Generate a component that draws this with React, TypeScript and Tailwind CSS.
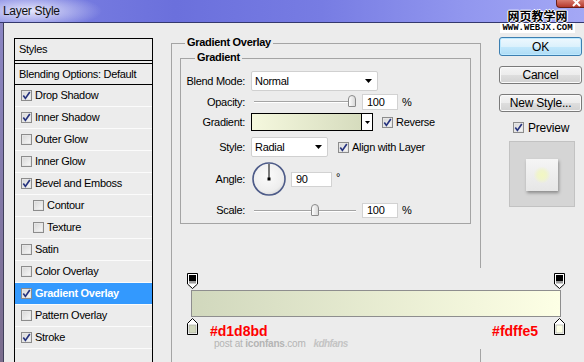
import React from "react";

const styleRows = [
  { label: "Drop Shadow", on: true },
  { label: "Inner Shadow", on: true },
  { label: "Outer Glow", on: false },
  { label: "Inner Glow", on: false },
  { label: "Bevel and Emboss", on: true },
  { label: "Contour", on: false, sub: true },
  { label: "Texture", on: false, sub: true },
  { label: "Satin", on: false },
  { label: "Color Overlay", on: false },
  { label: "Gradient Overlay", on: true, active: true },
  { label: "Pattern Overlay", on: false },
  { label: "Stroke", on: true },
];

function Check({ on }: { on?: boolean }) {
  return (
    <span className="flex h-[11px] w-[11px] shrink-0 items-center justify-center border border-[#8c8c8c] bg-[linear-gradient(135deg,#d6d6d6,#f9f9f9)] shadow-[inset_0_0_0_1px_#e6e6e6]">
      {on && (
        <svg width="9" height="9" viewBox="0 0 9 9">
          <path d="M1.3 4.6 L3.4 7.4 L7.8 1" fill="none" stroke="#26337e" strokeWidth="1.7" />
        </svg>
      )}
    </span>
  );
}

function Arrow() {
  return (
    <svg width="7" height="4" viewBox="0 0 7 4">
      <path d="M0 0 H7 L3.5 4 Z" fill="#000" />
    </svg>
  );
}

function Field({ value, w }: { value: string; w: string }) {
  return (
    <div className={`flex h-full items-center border border-[#d2d2d2] bg-white pl-[4px] ${w}`}>{value}</div>
  );
}

function Label({ text }: { text: string }) {
  return <div className="w-[64px] shrink-0 text-right">{text}</div>;
}

function Slider({ thumb }: { thumb: string }) {
  return (
    <div className="relative h-full w-[107px]">
      <div className="absolute left-[3px] right-[2px] top-1/2 h-[2px] -translate-y-1/2 border-t border-[#a4a4a4] border-b border-b-white" />
      <div className={`absolute top-[1px] h-[12px] w-[8px] rounded-t-[4px] rounded-b-[1px] border border-[#8a8a8a] bg-[linear-gradient(90deg,#fdfdfd,#d8d8d8)] ${thumb}`} />
    </div>
  );
}

function Btn({ children, primary }: { children: React.ReactNode; primary?: boolean }) {
  return (
    <div
      className={`flex items-center justify-center rounded-[3px] border text-[12px] tracking-[-0.2px] ${
        primary
          ? "h-[19px] border-[#3c7fb1] bg-[linear-gradient(#eef8fe_0%,#dcf1fc_50%,#c3e8fc_51%,#aedcf5_100%)] shadow-[inset_0_0_0_1px_#bde9ff]"
          : "h-[18px] border-[#7a7a7a] bg-[linear-gradient(#f4f4f4_0%,#ececec_50%,#dedede_51%,#d2d2d2_100%)] shadow-[inset_0_0_0_1px_#fafafa]"
      }`}
    >
      {children}
    </div>
  );
}

function TopStop() {
  return (
    <svg width="11" height="16" viewBox="0 0 11 16">
      <path d="M0.5 0.5 H10.5 V11 L5.5 15.5 L0.5 11 Z" fill="#fff" stroke="#000" />
      <rect x="2" y="2" width="7" height="6" fill="#000" />
      <rect x="2" y="8" width="7" height="2.5" fill="#9c9c9c" />
    </svg>
  );
}

function BottomStop({ color }: { color: string }) {
  return (
    <svg width="11" height="17" viewBox="0 0 11 17">
      <path d="M5.5 0.5 L10.5 5.5 V16.5 H0.5 V5.5 Z" fill="#fff" stroke="#000" />
      <rect x="2" y="7" width="7" height="8" fill={color} stroke="#a0a0a0" strokeWidth="0.6" />
    </svg>
  );
}

export default function App() {
  return (
    <div className="relative h-[362px] w-[584px] overflow-hidden bg-[#ececec] font-['Liberation_Sans',Arial,sans-serif] text-[11px] tracking-[-0.3px] text-black">
      {/* title bar */}
      <div className="flex h-[23px] justify-between border-b border-[#34386e] bg-[radial-gradient(ellipse_72px_18px_at_30px_11px,rgba(236,236,252,0.95),rgba(236,236,252,0)),linear-gradient(90deg,#7e83e2_0%,#6b70dc_30%,#777ce3_55%,#9297ef_80%,#a4a8f5_100%)]">
        <div className="flex items-center pl-[3px] text-[12px] text-[#111]">Layer Style</div>
        <div className="flex h-[8px] w-[28px] items-end justify-end rounded-bl-[4px] border-b border-l border-[#6a1f18] bg-[linear-gradient(#d97b6f,#b5392d)] pr-[3px]">
          <svg width="9" height="7" viewBox="0 0 9 7">
            <path d="M1 -1 L8 6 M8 -1 L1 6" stroke="#fff" strokeWidth="2" />
          </svg>
        </div>
      </div>

      <div className="flex h-[339px]">
        <div className="h-full w-[4px] border-r border-[#40405a] bg-[linear-gradient(#8b86c4,#7a6c8c)]" />

        {/* styles list */}
        <div className="ml-[10px] mt-[15px] h-[330px] w-[139px] border border-black">
          <div className="flex h-[22px] items-center border-b border-black pl-[4px]">Styles</div>
          <div className="h-[2px]" />
          <div className="flex h-[22px] items-center border-y border-black pl-[4px]">Blending Options: Default</div>
          {styleRows.map((r) => (
            <div
              key={r.label}
              className={`flex h-[22px] items-center gap-[3px] border-b border-[#fbfbfb] ${r.sub ? "pl-[18px]" : "pl-[6px]"} ${
                r.active ? "bg-[#3399fe] font-bold text-white" : ""
              }`}
            >
              <Check on={r.on} />
              <span>{r.label}</span>
            </div>
          ))}
        </div>

        {/* gradient overlay group */}
        <div className="relative ml-[18px] mt-[20px] h-[330px] w-[310px] border border-[#a4a4a4]">
          <span className="absolute left-[13px] top-[-8px] bg-[#ececec] px-[2px] font-bold leading-[13px]">Gradient Overlay</span>
          <div className="relative ml-[8px] mt-[14px] w-[291px] border border-[#a4a4a4] pb-[5px] pt-[12px]">
            <span className="absolute left-[14px] top-[-8px] bg-[#ececec] px-[2px] font-bold leading-[13px]">Gradient</span>

            <div className="flex h-[20px] items-center">
              <Label text="Blend Mode:" />
              <div className="ml-[6px] flex h-full w-[127px] items-center justify-between rounded-[2px] border border-[#d0d0d0] bg-white pl-[3px] pr-[5px]">
                <span>Normal</span>
                <Arrow />
              </div>
            </div>

            <div className="mt-[3px] flex h-[16px] items-center">
              <Label text="Opacity:" />
              <div className="ml-[6px] h-full">
                <Slider thumb="left-[97px]" />
              </div>
              <div className="ml-[4px] h-full">
                <Field value="100" w="w-[36px]" />
              </div>
              <span className="ml-[4px]">%</span>
            </div>

            <div className="mt-[3px] flex h-[18px] items-center">
              <Label text="Gradient:" />
              <div className="ml-[6px] flex h-full w-[122px] border border-black">
                <div className="h-full flex-1 bg-[linear-gradient(90deg,#f5f8de,#d6dcbe)]" />
                <div className="flex h-full w-[11px] items-center justify-center border-l border-black bg-white">
                  <svg width="5" height="3" viewBox="0 0 5 3">
                    <path d="M0 0 H5 L2.5 3 Z" fill="#000" />
                  </svg>
                </div>
              </div>
              <div className="ml-[9px] flex items-center gap-[3px]">
                <Check on />
                <span>Reverse</span>
              </div>
            </div>

            <div className="mt-[6px] flex h-[20px] items-center">
              <Label text="Style:" />
              <div className="ml-[6px] flex h-full w-[77px] items-center justify-between rounded-[2px] border border-[#d0d0d0] bg-white pl-[3px] pr-[5px]">
                <span>Radial</span>
                <Arrow />
              </div>
              <div className="ml-[10px] flex items-center gap-[3px]">
                <Check on />
                <span>Align with Layer</span>
              </div>
            </div>

            <div className="mt-[5px] flex h-[34px] items-center">
              <Label text="Angle:" />
              <svg className="ml-[7px]" width="34" height="34" viewBox="0 0 34 34">
                <defs>
                  <radialGradient id="dial" cx="0.45" cy="0.4" r="0.65">
                    <stop offset="0" stopColor="#fbfbfb" />
                    <stop offset="0.75" stopColor="#eeeeee" />
                    <stop offset="1" stopColor="#d4d4d4" />
                  </radialGradient>
                </defs>
                <circle cx="17" cy="17" r="16" fill="url(#dial)" stroke="#4d5b88" strokeWidth="1.6" />
                <line x1="17" y1="17" x2="17" y2="2" stroke="#000" strokeWidth="1" />
                <rect x="15.5" y="15.5" width="3" height="3" fill="#000" />
              </svg>
              <div className="ml-[5px] h-[15px]">
                <Field value="90" w="w-[41px]" />
              </div>
              <span className="ml-[4px] self-start pt-[7px]">°</span>
            </div>

            <div className="mt-[7px] flex h-[15px] items-center">
              <Label text="Scale:" />
              <div className="ml-[6px] h-full">
                <Slider thumb="left-[60px]" />
              </div>
              <div className="ml-[4px] h-full">
                <Field value="100" w="w-[36px]" />
              </div>
              <span className="ml-[4px]">%</span>
            </div>
          </div>
        </div>

        {/* buttons */}
        <div className="ml-[18px] mt-[14px] flex w-[83px] flex-col">
          <Btn primary>OK</Btn>
          <div className="mt-[10px]">
            <Btn>Cancel</Btn>
          </div>
          <div className="mt-[10px]">
            <Btn>New Style...</Btn>
          </div>
          <div className="mt-[9px] flex h-[13px] items-center gap-[4px] pl-[14px] text-[12px] tracking-[-0.2px]">
            <Check on />
            <span>Preview</span>
          </div>
          <div className="ml-[10px] mt-[7px] flex h-[66px] w-[66px] items-center justify-center border border-[#c2c2c2] bg-[#d5d5d5] pt-[2px]">
            <div className="flex h-[32px] w-[32px] items-center justify-center bg-[linear-gradient(#f5f5f5,#e6e6e6)] shadow-[1px_2px_3px_rgba(0,0,0,0.35)]">
              <div className="h-[16px] w-[16px] bg-[radial-gradient(circle,#f2f7c2_0%,#f0f4cc_40%,rgba(240,240,230,0)_75%)]" />
            </div>
          </div>
        </div>
      </div>

      {/* gradient annotation laid over the dialog */}
      <div className="absolute left-[183px] top-[268px] w-[392px] bg-[#ececec] pt-[5px]">
        <div className="ml-[4px] flex h-[16px] w-[378px] justify-between">
          <TopStop />
          <TopStop />
        </div>
        <div className="ml-[8px] mt-[1px] h-[27px] w-[370px] border border-[#8e8e8e] bg-[linear-gradient(90deg,#d1d8bd,#fdffe5)]" />
        <div className="ml-[4px] mt-[1px] flex w-[378px] items-start">
          <BottomStop color="#d1d8bd" />
          <span className="ml-[12px] mt-[6px] text-[14px] font-bold leading-[14px] tracking-normal text-[#ff0000]">#d1d8bd</span>
          <span className="ml-auto mt-[6px] text-[14px] font-bold leading-[14px] tracking-normal text-[#ff0000]">#fdffe5</span>
          <span className="ml-[16px]">
            <BottomStop color="#fdffe5" />
          </span>
        </div>
        <div className="ml-[31px] flex items-center text-[10px] leading-[11px] tracking-[-0.2px] text-[#b4b4b4]">
          <span>
            post at <b>iconfans</b>.com
          </span>
          <span className="ml-[8px] font-bold italic tracking-[-0.6px] text-[#c4c4c4]">kdhfans</span>
        </div>
      </div>

      {/* site watermark */}
      <div className="absolute left-[500px] top-[9px] flex w-[75px] flex-col items-center">
        <span className="font-['Noto_Sans_CJK_SC',sans-serif] text-[12px] font-bold leading-[14px] tracking-normal text-black [text-shadow:1px_0_0_#fff,-1px_0_0_#fff,0_1px_0_#fff,0_-1px_0_#fff]">
          网页教学网
        </span>
        <span className="h-[10px] w-[75px] bg-white text-center font-['Liberation_Mono',monospace] text-[9px] font-bold leading-[10px] tracking-normal">
          WWW.WEBJX.COM
        </span>
      </div>
    </div>
  );
}
